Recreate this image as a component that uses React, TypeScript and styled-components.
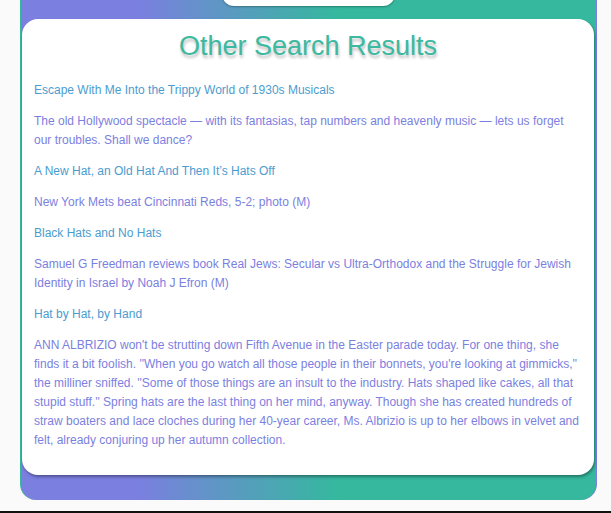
import React from "react";
import styled, { createGlobalStyle } from "styled-components";

const GlobalStyle = createGlobalStyle`
  html, body { margin: 0; padding: 0; background: #fafafa; }
  body { font-family: "Liberation Sans", Arial, sans-serif; overflow: hidden; }
`;

const Page = styled.div`
  margin-top: -34px;
  display: flex;
  flex-direction: column;
`;

const Panel = styled.section`
  margin-left: 20px;
  width: 577px;
  box-sizing: border-box;
  padding: 10px 2px 25px 1px;
  background: linear-gradient(90deg, #7b7fe0 20%, #35b89e 55%);
  border-left: 1px solid #35b89e;
  border-right: 1px solid #7b7fe0;
  border-radius: 0 0 16px 16px;
  display: flex;
  flex-direction: column;
  align-items: stretch;
`;

const SearchBox = styled.div`
  align-self: center;
  width: 173px;
  height: 30px;
  background: #ffffff;
  border-radius: 12px;
  box-shadow: 0 1px 2px rgba(0, 0, 0, 0.3);
`;

const Card = styled.div`
  margin-top: 13px;
  background: #ffffff;
  border-radius: 16px;
  box-shadow: 1px 2px 3px rgba(0, 0, 0, 0.35);
  padding: 12px 12px 25px 12px;
  display: flex;
  flex-direction: column;
`;

const Title = styled.h2`
  margin: 0 0 19px;
  text-align: center;
  font-size: 27px;
  font-weight: 400;
  line-height: 31px;
  color: #3cb9a0;
  text-shadow: 1px 3px 3px rgba(0, 0, 0, 0.25);
`;

const ResultList = styled.div`
  display: flex;
  flex-direction: column;
  gap: 12px;
`;

const Result = styled.div`
  display: flex;
  flex-direction: column;
  gap: 12px;
`;

const ResultLink = styled.a`
  font-size: 12px;
  line-height: 19px;
  color: #4b9ccf;
  text-decoration: none;
`;

const Snippet = styled.p`
  margin: 0;
  font-size: 12px;
  line-height: 19px;
  color: #7b7fe0;
`;

const BottomRule = styled.div`
  margin-top: 11px;
  height: 2px;
  background: #111111;
`;

const results = [
  {
    title: "Escape With Me Into the Trippy World of 1930s Musicals",
    snippet:
      "The old Hollywood spectacle \u2014 with its fantasias, tap numbers and heavenly music \u2014 lets us forget our troubles. Shall we dance?",
  },
  {
    title: "A New Hat, an Old Hat And Then It\u2019s Hats Off",
    snippet: "New York Mets beat Cincinnati Reds, 5-2; photo (M)",
  },
  {
    title: "Black Hats and No Hats",
    snippet:
      "Samuel G Freedman reviews book Real Jews: Secular vs Ultra-Orthodox and the Struggle for Jewish Identity in Israel by Noah J Efron (M)",
  },
  {
    title: "Hat by Hat, by Hand",
    snippet:
      "ANN ALBRIZIO won't be strutting down Fifth Avenue in the Easter parade today. For one thing, she finds it a bit foolish. ''When you go watch all those people in their bonnets, you're looking at gimmicks,'' the milliner sniffed. ''Some of those things are an insult to the industry. Hats shaped like cakes, all that stupid stuff.'' Spring hats are the last thing on her mind, anyway. Though she has created hundreds of straw boaters and lace cloches during her 40-year career, Ms. Albrizio is up to her elbows in velvet and felt, already conjuring up her autumn collection.",
  },
];

export default function App() {
  return (
    <>
      <GlobalStyle />
      <Page>
        <Panel>
          <SearchBox />
          <Card>
            <Title>Other Search Results</Title>
            <ResultList>
              {results.map((r) => (
                <Result key={r.title}>
                  <ResultLink href="#">{r.title}</ResultLink>
                  <Snippet>{r.snippet}</Snippet>
                </Result>
              ))}
            </ResultList>
          </Card>
        </Panel>
        <BottomRule />
      </Page>
    </>
  );
}
